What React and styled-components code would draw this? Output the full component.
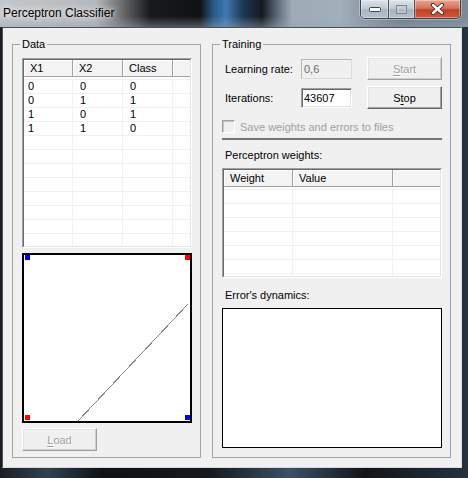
import styled, { createGlobalStyle } from 'styled-components';

const GlobalStyle = createGlobalStyle`
  html, body { margin: 0; padding: 0; }
  body {
    background: #111;
    font-family: "Liberation Sans", Arial, sans-serif;
    font-size: 11px;
    color: #000;
  }
  * { box-sizing: border-box; }
`;

const dataColumns = [
  { label: 'X1', width: 49, pad: 4 },
  { label: 'X2', width: 50, pad: 7 },
  { label: 'Class', width: 50, pad: 7 },
];

const dataRows = [
  ['0', '0', '0'],
  ['0', '1', '1'],
  ['1', '0', '1'],
  ['1', '1', '0'],
];

const weightColumns = [
  { label: 'Weight', width: 69, pad: 6 },
  { label: 'Value', width: 100, pad: 6 },
];

const ListView = ({ columns, rows, total, width, height }) => {
  const padded = [...rows, ...Array(total - rows.length).fill(null)];
  return (
    <ListOuter $w={width} $h={height}>
      <ListInner>
        <HeaderRow>
          {columns.map(c => <HeaderCell key={c.label} $w={c.width}>{c.label}</HeaderCell>)}
          <HeaderCell $fill />
        </HeaderRow>
        <ListBody>
          {padded.map((r, i) => (
            <Row key={i}>
              {columns.map((c, j) => (
                <Cell key={c.label} $w={c.width} $pad={c.pad}>{r ? r[j] : ''}</Cell>
              ))}
              <Cell $fill />
            </Row>
          ))}
        </ListBody>
      </ListInner>
    </ListOuter>
  );
};

const App = () => {
  return (
    <>
      <GlobalStyle />
      <Window>
        <TitleBar>
          <Title>Perceptron Classifier</Title>
          <CaptionButtons>
            <CaptionButton $w={28}>
              <svg width="12" height="5" viewBox="0 0 12 5">
                <rect x="0.5" y="0.5" width="11" height="4" rx="1" fill="#fff" stroke="#3b4550" />
              </svg>
            </CaptionButton>
            <CaptionButton $w={27}>
              <svg width="11" height="9" viewBox="0 0 11 9">
                <rect x="0.5" y="0.5" width="10" height="8" fill="none" stroke="#7d8893" />
                <rect x="2" y="3" width="7" height="4" fill="none" stroke="#c9d1d9" />
              </svg>
            </CaptionButton>
            <CaptionButton $w={47} $close>
              <svg width="15" height="12" viewBox="0 0 15 12">
                <path d="M3 2 L12 10 M12 2 L3 10" stroke="#4a2620" strokeWidth="4.2" strokeLinecap="round" />
                <path d="M3 2 L12 10 M12 2 L3 10" stroke="#fff" strokeWidth="2.4" strokeLinecap="round" />
              </svg>
            </CaptionButton>
          </CaptionButtons>
        </TitleBar>
        <Frame>
          <Client>
            <GroupBox>
              <Legend>Data</Legend>
              <ListView columns={dataColumns} rows={dataRows} total={13} width={170} height={190} />
              <Chart>
                <svg width="166" height="166" viewBox="0 0 166 166" shapeRendering="crispEdges">
                  <line x1="54" y1="166" x2="164" y2="49" stroke="#8a8a8a" strokeWidth="1" />
                  <rect x="1" y="0" width="5" height="5" fill="#0000ff" />
                  <rect x="161" y="0" width="5" height="5" fill="#ff0000" />
                  <rect x="1" y="160" width="5" height="5" fill="#ff0000" />
                  <rect x="161" y="160" width="5" height="5" fill="#0000ff" />
                </svg>
              </Chart>
              <Button $disabled $top={5}><u>L</u>oad</Button>
            </GroupBox>
            <GroupBox>
              <Legend>Training</Legend>
              <FieldRow $top={6}>
                <FieldLabel>Learning rate:</FieldLabel>
                <TextBox $disabled>0,6</TextBox>
                <Button $disabled><u>S</u>tart</Button>
              </FieldRow>
              <FieldRow $top={6}>
                <FieldLabel>Iterations:</FieldLabel>
                <TextBox>43607</TextBox>
                <Button>S<u>t</u>op</Button>
              </FieldRow>
              <CheckRow>
                <CheckBox />
                <span>Save weights and errors to files</span>
              </CheckRow>
              <Separator />
              <SectionLabel $top={9}>Perceptron weights:</SectionLabel>
              <ListSlot>
                <ListView columns={weightColumns} rows={[]} total={7} width={220} height={110} />
              </ListSlot>
              <SectionLabel $top={11}>Error's dynamics:</SectionLabel>
              <ErrorPlot />
            </GroupBox>
          </Client>
        </Frame>
      </Window>
    </>
  );
};

export default App;

const Window = styled.div`
  width: 468px;
  height: 478px;
  display: flex;
  flex-direction: column;
  background: linear-gradient(90deg, #1b1e22 0%, #2e4152 10%, #0f1113 22%, #161a1e 45%, #3a5166 62%, #121417 78%, #24323f 100%);
`;

const TitleBar = styled.div`
  height: 27px;
  flex: none;
  display: flex;
  justify-content: space-between;
  align-items: flex-start;
  padding: 0 7px 0 3px;
  background:
    linear-gradient(180deg, rgba(0, 0, 0, 0) 60%, rgba(150, 165, 182, 0.45) 100%),
    linear-gradient(90deg, #c5c8cb 0px, #b6b9bc 95px, #6a6c6e 122px, #18191a 150px, #111213 200px,
      #2c5a8c 214px, #3f78b0 226px, #1c3552 244px, #15191e 262px, #5f6e7c 278px, #9eaab5 292px,
      #a3b0bb 340px, #8d9aa5 362px, #6f7d8a 400px, #7c8996 468px);
`;

const Title = styled.div`
  font-family: "Segoe UI", "Liberation Sans", Arial, sans-serif;
  font-size: 12px;
  line-height: 16px;
  margin-top: 5px;
  color: #000;
  text-shadow: 0 0 6px rgba(255, 255, 255, 0.9), 0 0 10px rgba(255, 255, 255, 0.6);
`;

const CaptionButtons = styled.div`
  display: flex;
  height: 19px;
  border: 1px solid #3b434d;
  border-top: none;
  border-radius: 0 0 5px 5px;
  overflow: hidden;
  box-shadow: 0 0 0 1px rgba(255, 255, 255, 0.35);
`;

const CaptionButton = styled.div`
  width: ${p => p.$w - 1}px;
  display: flex;
  align-items: center;
  justify-content: center;
  border-left: 1px solid #4a525c;
  &:first-child { border-left: none; }
  box-shadow: inset 0 0 0 1px rgba(255, 255, 255, 0.35);
  background: ${p => p.$close
    ? 'linear-gradient(180deg, #e6a593 0%, #d5735c 45%, #c23f25 55%, #cf5b3c 100%)'
    : 'linear-gradient(180deg, #dde3e9 0%, #c3ccd5 45%, #a9b5c1 55%, #b4c0cb 100%)'};
`;

const Frame = styled.div`
  flex: 1;
  display: flex;
  padding: 0 6px 10px 2px;
`;

const Client = styled.div`
  flex: 1;
  display: grid;
  grid-template-columns: 189px 239px;
  column-gap: 11px;
  padding: 10px 10px 9px 9px;
  background: #f0f0f0;
  border: 1px solid #4b5057;
  border-right-color: #d8dde2;
  border-bottom-color: #d8dde2;
`;

const GroupBox = styled.fieldset`
  margin: 0;
  padding: 0 0 0 9px;
  min-width: 0;
  border: 1px solid #a3a3a3;
  display: flex;
  flex-direction: column;
  align-items: flex-start;
`;

const Legend = styled.legend`
  padding: 0 2px;
  margin-left: -2px;
  font-size: 11px;
  line-height: 13px;
`;

const ListOuter = styled.div`
  width: ${p => p.$w}px;
  height: ${p => p.$h}px;
  margin-top: 7px;
  border: 1px solid;
  border-color: #a0a0a0 #ffffff #ffffff #a0a0a0;
  background: #fff;
  flex: none;
`;

const ListInner = styled.div`
  height: 100%;
  border: 1px solid;
  border-color: #696969 #e3e3e3 #e3e3e3 #696969;
  overflow: hidden;
  background: #fff;
`;

const HeaderRow = styled.div`
  display: flex;
  height: 17px;
`;

const HeaderCell = styled.div`
  flex: ${p => (p.$fill ? '1' : `0 0 ${p.$w}px`)};
  padding-left: 6px;
  line-height: 16px;
  white-space: nowrap;
  background: #f3f3f3;
  border-bottom: 1px solid #a0a0a0;
  border-right: ${p => (p.$fill ? 'none' : '1px solid #a0a0a0')};
  box-shadow: inset 1px 1px 0 #fff;
`;

const ListBody = styled.div`
  margin-top: 2px;
`;

const Row = styled.div`
  display: flex;
  height: 14px;
  border-top: 1px solid #f0f0f0;
`;

const Cell = styled.div`
  flex: ${p => (p.$fill ? '1' : `0 0 ${p.$w}px`)};
  padding-left: ${p => p.$pad || 0}px;
  line-height: 13px;
  border-right: ${p => (p.$fill ? 'none' : '1px solid #f0f0f0')};
`;

const Chart = styled.div`
  width: 170px;
  height: 170px;
  margin-top: 5px;
  border: 2px solid #000;
  background: #fff;
  flex: none;
  svg { display: block; }
`;

const Button = styled.div`
  width: 75px;
  height: 23px;
  margin-top: ${p => p.$top || 0}px;
  display: flex;
  align-items: center;
  justify-content: center;
  background: #f0f0f0;
  border: 1px solid;
  border-color: #fff ${p => (p.$disabled ? '#a0a0a0' : '#696969')} ${p => (p.$disabled ? '#a0a0a0' : '#696969')} #fff;
  box-shadow: inset -1px -1px 0 ${p => (p.$disabled ? '#cfcfcf' : '#a0a0a0')}, inset 1px 1px 0 #e3e3e3;
  color: ${p => (p.$disabled ? '#a0a0a0' : '#000')};
  text-shadow: ${p => (p.$disabled ? '1px 1px 0 #fff' : 'none')};
  u { text-decoration-thickness: 1px; text-underline-offset: 2px; }
`;

const FieldRow = styled.div`
  width: 220px;
  display: grid;
  grid-template-columns: 79px 66px 75px;
  align-items: center;
  margin-top: ${p => p.$top}px;
`;

const FieldLabel = styled.div`
  padding-left: 3px;
  white-space: nowrap;
`;

const TextBox = styled.div`
  width: 51px;
  height: 20px;
  padding-left: 2px;
  line-height: 18px;
  border: 1px solid;
  border-color: ${p => (p.$disabled ? '#b9b9b9 #dcdcdc #dcdcdc #b9b9b9' : '#a0a0a0 #fff #fff #a0a0a0')};
  box-shadow: ${p => (p.$disabled ? 'none' : 'inset 1px 1px 0 #696969, inset -1px -1px 0 #e3e3e3')};
  background: ${p => (p.$disabled ? '#f0f0f0' : '#fff')};
  color: ${p => (p.$disabled ? '#6d6d6d' : '#000')};
`;

const CheckRow = styled.div`
  display: flex;
  align-items: center;
  gap: 5px;
  margin-top: 11px;
  height: 13px;
  color: #a0a0a0;
  white-space: nowrap;
`;

const CheckBox = styled.span`
  width: 13px;
  height: 13px;
  flex: none;
  border: 1px solid;
  border-color: #a0a0a0 #fff #fff #a0a0a0;
  box-shadow: inset 1px 1px 0 #c8c8c8;
  background: #f0f0f0;
`;

const Separator = styled.div`
  width: 220px;
  height: 2px;
  margin-top: 5px;
  background: #767676;
`;

const SectionLabel = styled.div`
  margin-top: ${p => p.$top}px;
  padding-left: 3px;
  line-height: 13px;
`;

const ListSlot = styled.div`
  margin-top: -1px;
`;

const ErrorPlot = styled.div`
  width: 220px;
  height: 140px;
  margin-top: 6px;
  border: 1px solid #000;
  background: #fff;
`;
